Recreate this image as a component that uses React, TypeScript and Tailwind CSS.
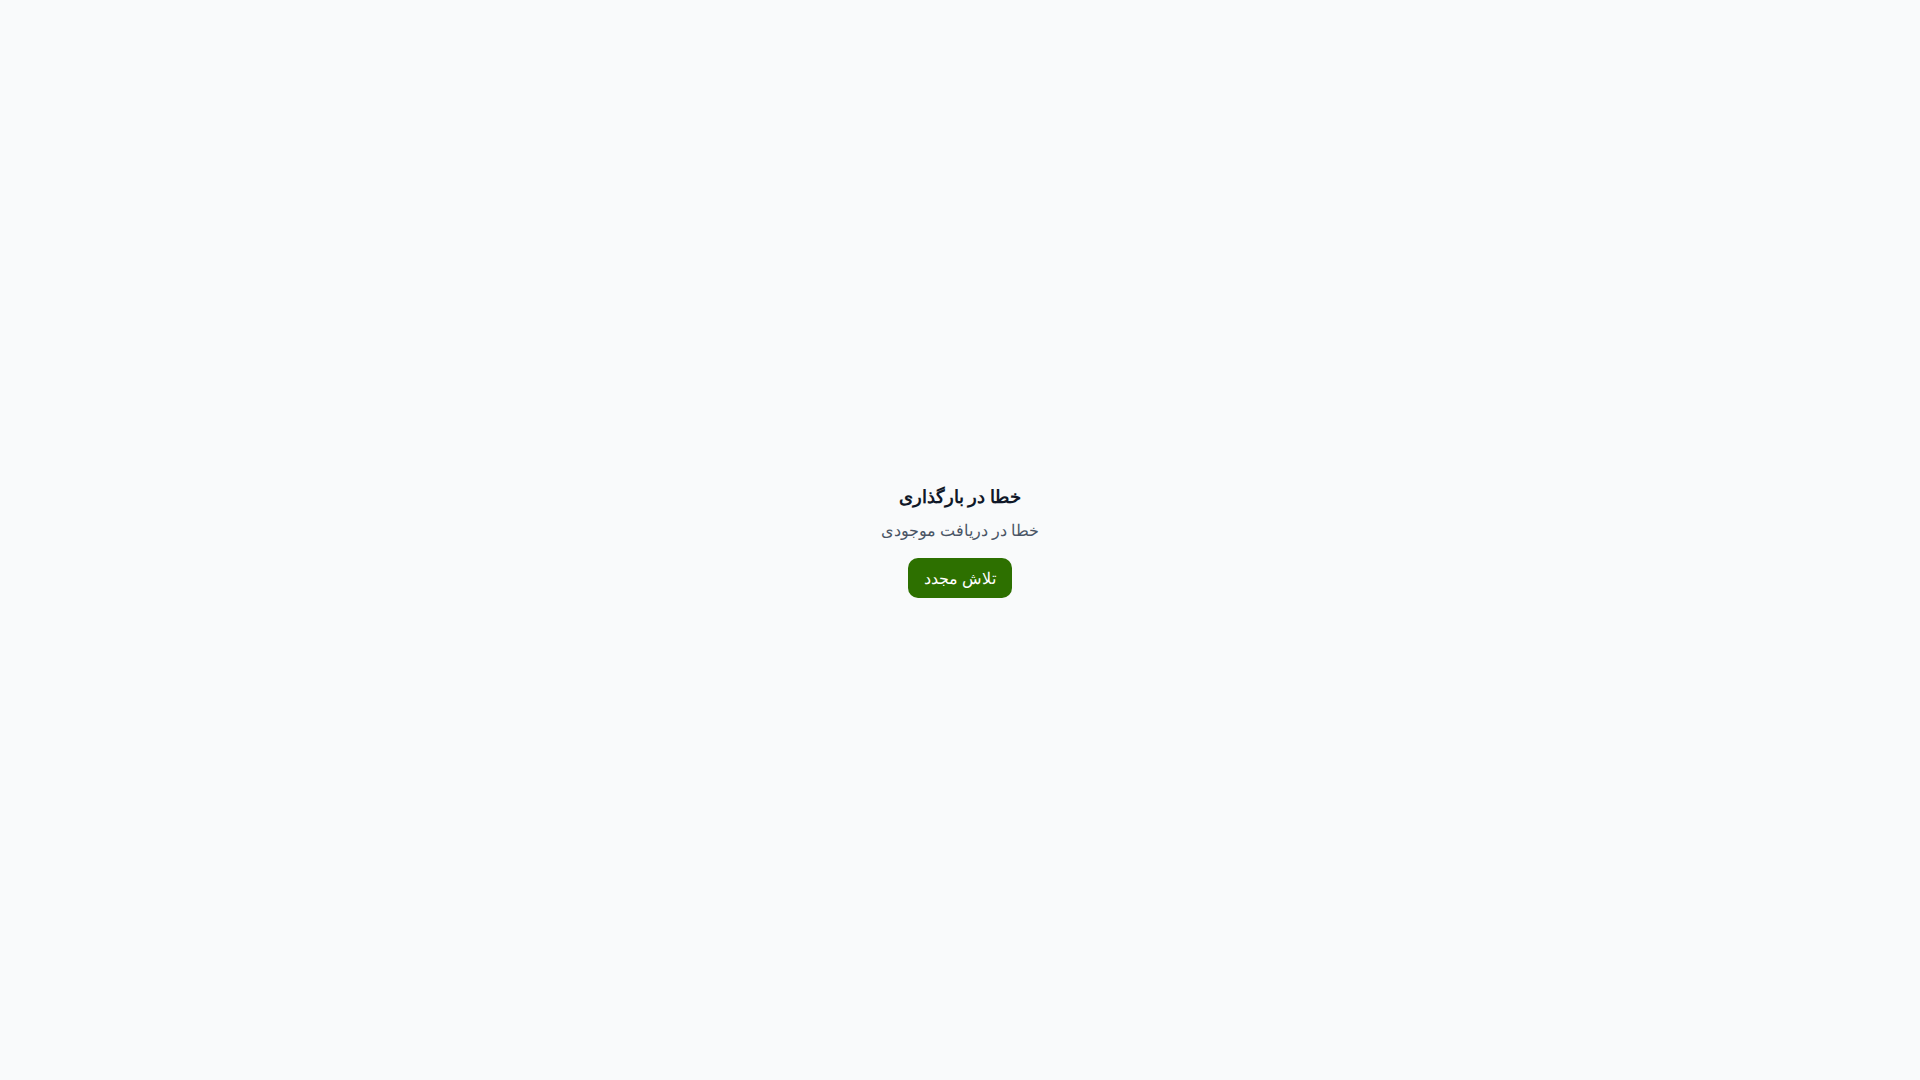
import React from 'react';

interface ErrorStateProps {
  title: string;
  message: string;
  retryLabel: string;
  onRetry: () => void;
}

function ErrorState({ title, message, retryLabel, onRetry }: ErrorStateProps) {
  return (
    <div className="text-center">
      <h2 className="mb-2 text-lg font-bold text-gray-900">{title}</h2>
      <p className="mb-4 text-base text-gray-600">{message}</p>
      <button
        type="button"
        onClick={onRetry}
        className="rounded-[10px] bg-[#2d7000] px-4 py-2 text-base text-white hover:bg-[#245a00]"
      >
        {retryLabel}
      </button>
    </div>
  );
}

export default function App() {
  return (
    <div
      dir="rtl"
      lang="fa"
      className="flex min-h-screen items-center justify-center bg-gray-50 font-[system-ui,sans-serif]"
    >
      <ErrorState
        title="خطا در بارگذاری"
        message="خطا در دریافت موجودی"
        retryLabel="تلاش مجدد"
        onRetry={() => window.location.reload()}
      />
    </div>
  );
}
